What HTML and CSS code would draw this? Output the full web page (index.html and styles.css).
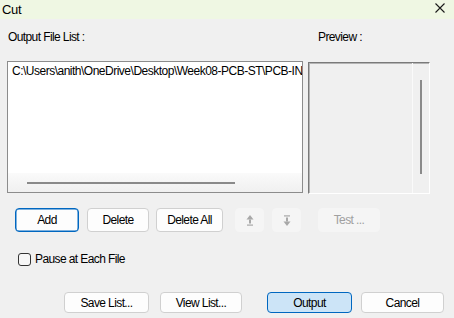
FILE: index.html
```html
<!DOCTYPE html>
<html lang="en">
<head>
    <meta charset="UTF-8">
    <title>Cut</title>
    <link rel="stylesheet" href="styles.css">
</head>
<body>
    <div class="titlebar">
        <span class="title">Cut</span>
        <svg class="close" width="10" height="10" viewBox="0 0 10 10">
            <path d="M0.5 0.5 L9.5 9.5 M9.5 0.5 L0.5 9.5" stroke="#1a1a1a" stroke-width="1.1" fill="none"/>
        </svg>
    </div>

    <div class="panes">
        <div class="pane">
            <div class="label list-label">Output File List :</div>
            <div class="listbox">
                <div class="list-items">
                    <div class="item">C:\Users\anith\OneDrive\Desktop\Week08-PCB-ST\PCB-IN</div>
                </div>
                <div class="hscroll"><div class="hthumb"></div></div>
            </div>
        </div>
        <div class="pane">
            <div class="label preview-label">Preview :</div>
            <div class="preview">
                <div class="vscroll"><div class="vthumb"></div></div>
            </div>
        </div>
    </div>

    <div class="toolbar">
        <button class="btn focus w-add">Add</button>
        <button class="btn w-del">Delete</button>
        <button class="btn w-delall">Delete All</button>
        <button class="btn disabled w-arrow" disabled>
            <svg width="8" height="11" viewBox="0 0 8 11">
                <path d="M4 0 L7.5 4.5 L0.5 4.5 Z" fill="#a8a8a8"/>
                <rect x="3" y="4.5" width="2" height="4" fill="#a8a8a8"/>
                <rect x="1" y="9.5" width="6" height="1.2" fill="#a8a8a8"/>
            </svg>
        </button>
        <button class="btn disabled w-arrow down" disabled>
            <svg width="8" height="11" viewBox="0 0 8 11">
                <rect x="1" y="0.3" width="6" height="1.2" fill="#a8a8a8"/>
                <rect x="3" y="2.5" width="2" height="4" fill="#a8a8a8"/>
                <path d="M4 11 L7.5 6.5 L0.5 6.5 Z" fill="#a8a8a8"/>
            </svg>
        </button>
        <button class="btn disabled w-test" disabled>Test ...</button>
    </div>

    <label class="check-row">
        <span class="checkbox"></span>
        <span>Pause at Each File</span>
    </label>

    <div class="footer">
        <button class="btn w-save">Save List...</button>
        <button class="btn w-view">View List...</button>
        <button class="btn primary w-out">Output</button>
        <button class="btn w-cancel">Cancel</button>
    </div>
</body>
</html>
```

FILE: styles.css
```css
body {
    margin: 0;
    width: 454px;
    height: 318px;
    background: #f0f0f0;
    font-family: "Liberation Sans", Arial, sans-serif;
    font-size: 12px;
    letter-spacing: -0.6px;
    color: #000;
    overflow: hidden;
}
.titlebar {
    height: 19px;
    background: #eff7e3;
    display: flex;
    align-items: center;
    justify-content: space-between;
    padding: 0 9px 0 2px;
}
.title {
    font-size: 13px;
    letter-spacing: -0.3px;
}
.close {
    margin-top: -3px;
}
.panes {
    display: flex;
    gap: 5px;
    padding: 11px 0 0 7px;
}
.pane {
    display: flex;
    flex-direction: column;
}
.label {
    height: 14px;
    line-height: 14px;
    margin-bottom: 17px;
}
.list-label {
    padding-left: 1px;
}
.preview-label {
    padding-left: 10px;
}
.listbox {
    width: 294px;
    height: 130px;
    border: 1px solid #8c8c8c;
    background: #fff;
    display: flex;
    flex-direction: column;
}
.list-items {
    flex: 1;
    overflow: hidden;
    padding: 2px 0 0 4px;
}
.item {
    white-space: nowrap;
    line-height: 14px;
    letter-spacing: -0.5px;
}
.hscroll {
    height: 19px;
    background: linear-gradient(#fafafa, #f0f0f0);
    display: flex;
    align-items: center;
}
.hthumb {
    margin-left: 19px;
    width: 208px;
    height: 2px;
    background: #8a8a8a;
}
.preview {
    margin-top: 1px;
    width: 120px;
    height: 130px;
    border-top: 1px solid #7a7a7a;
    border-left: 1px solid #7a7a7a;
    border-right: 1px solid #fff;
    border-bottom: 1px solid #fff;
    box-shadow: inset 1px 1px 0 #b4b4b4;
    background: #f0f0f0;
    display: flex;
    justify-content: flex-end;
}
.vscroll {
    width: 16px;
    border-left: 1px solid #fafafa;
    display: flex;
    justify-content: center;
}
.vthumb {
    margin-top: 17px;
    width: 2px;
    height: 94px;
    background: #8a8a8a;
}
.toolbar {
    display: flex;
    align-items: center;
    margin-top: 14px;
    padding-left: 15px;
    height: 24px;
}
.btn {
    font-family: inherit;
    font-size: 12px;
    letter-spacing: -0.6px;
    color: #000;
    height: 24px;
    padding: 0;
    background: #fdfdfd;
    border: 1px solid #d0d0d0;
    border-radius: 4px;
    display: flex;
    align-items: center;
    justify-content: center;
}
.btn.focus {
    border: 1px solid #0067c0;
    box-shadow: inset 0 0 0 0.5px #0067c0;
}
.btn.primary {
    background: #cce4f7;
    border: 1px solid #0067c0;
}
.btn.disabled {
    background: #f5f5f5;
    border-color: #f5f5f5;
    color: #a0a0a0;
}
.w-add { width: 64px; margin-right: 8px; }
.w-del { width: 62px; margin-right: 7px; }
.w-delall { width: 67px; margin-right: 12px; }
.w-arrow { width: 29px; margin-right: 8px; }
.w-arrow.down { margin-right: 17px; }
.w-test { width: 62px; }
.check-row {
    display: flex;
    align-items: center;
    gap: 4px;
    margin-top: 20px;
    padding-left: 18px;
    height: 14px;
}
.checkbox {
    width: 11px;
    height: 11px;
    border: 1px solid #333;
    border-radius: 3px;
    background: #f7f7f7;
}
.footer {
    display: flex;
    margin-top: 26px;
    padding-left: 64px;
}
.footer .btn {
    height: 21px;
}
.w-save { width: 85px; margin-right: 11px; }
.w-view { width: 82px; margin-right: 25px; }
.w-out { width: 85px; margin-right: 9px; }
.w-cancel { width: 83px; }
```
